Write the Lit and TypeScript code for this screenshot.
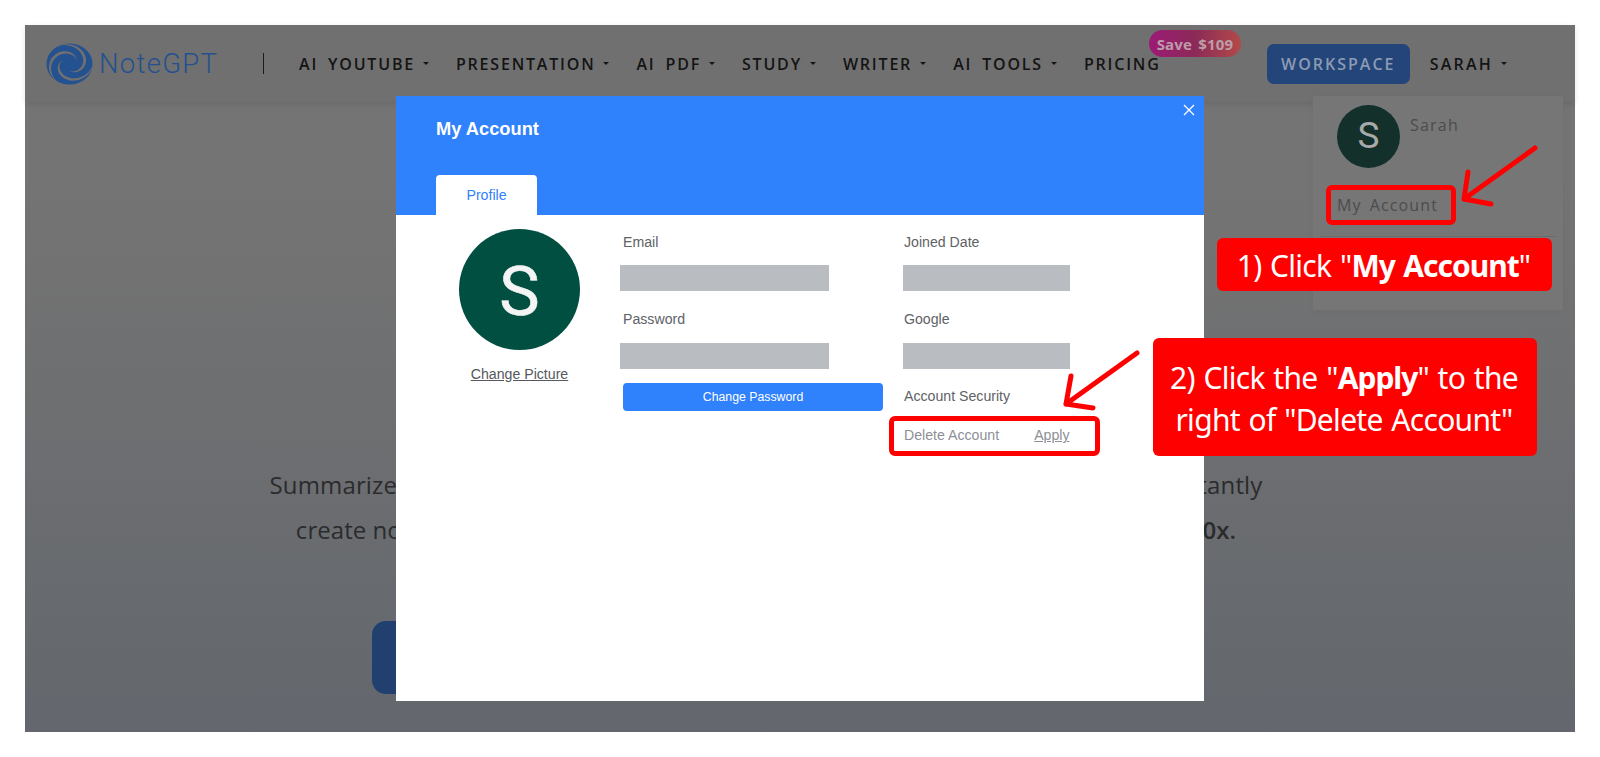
import { LitElement, html, css, svg } from "lit";
import { customElement } from "lit/decorators.js";

const NAV = [
  { t: "AI YOUTUBE", c: true },
  { t: "PRESENTATION", c: true },
  { t: "AI PDF", c: true },
  { t: "STUDY", c: true },
  { t: "WRITER", c: true },
  { t: "AI TOOLS", c: true },
  { t: "PRICING", c: false },
];

function blade(offset: number): string {
  const steps = 24;
  const outer: string[] = [];
  const inner: string[] = [];
  for (let i = 0; i <= steps; i++) {
    const t = i / steps;
    const r = 50 - 34 * t;
    const a = ((offset + 215 * t) * Math.PI) / 180;
    const w = 6 * Math.sin(Math.PI * Math.min(1, t * 1.05)) + 0.4;
    const p = (rad: number) =>
      `${(50 + rad * Math.cos(a)).toFixed(1)} ${(50 + rad * Math.sin(a)).toFixed(1)}`;
    outer.push(p(r + w / 2));
    inner.unshift(p(r - w / 2));
  }
  return "M" + outer.concat(inner).join(" L") + " Z";
}

const swirl = svg`<svg class="logo" viewBox="0 0 100 100" preserveAspectRatio="none" aria-hidden="true">
  <circle cx="50" cy="50" r="49" fill="#24518f"></circle>
  ${[0, 120, 240].map((a) => svg`<path fill="#707070" d="${blade(a)}"></path>`)}
</svg>`;

@customElement("app-root")
export class AppRoot extends LitElement {
  static styles = css`
    :host {
      display: block;
      position: relative;
      width: 1600px;
      height: 757px;
      background: #fff;
      overflow: hidden;
      font-family: "Liberation Sans", Arial, sans-serif;
    }
    .frame {
      margin: 25px;
      height: 707px;
      background: linear-gradient(#757575 0%, #737373 30%, #63676d 100%);
      display: flex;
      flex-direction: column;
      font-family: "Open Sans", sans-serif;
    }
    .nav {
      height: 77px;
      flex: none;
      background: #707070;
      box-shadow: 0 2px 6px rgba(0, 0, 0, 0.1);
      display: flex;
      align-items: center;
      padding-left: 21px;
      position: relative;
    }
    .logo {
      width: 47px;
      height: 42px;
      flex: none;
      margin-right: 6px;
    }
    .brand {
      font: 300 27.5px Roboto, sans-serif;
      letter-spacing: 1.3px;
      color: #24508f;
      width: 164px;
      flex: none;
    }
    .sep {
      width: 1px;
      height: 21px;
      background: #1a1a1a;
      flex: none;
      margin-right: 35px;
    }
    .items {
      display: flex;
      gap: 27px;
      align-items: center;
    }
    .item {
      font-size: 16px;
      font-weight: 600;
      letter-spacing: 1.8px;
      word-spacing: 4px;
      color: #141414;
      white-space: nowrap;
      display: flex;
      align-items: center;
    }
    .item.user {
      letter-spacing: 2.2px;
    }
    .caret {
      width: 0;
      height: 0;
      margin-left: 8px;
      border: 3px solid transparent;
      border-top-color: #141414;
      border-bottom-width: 0;
    }
    .badge {
      position: absolute;
      left: 1124px;
      top: 5px;
      width: 92px;
      height: 27px;
      border-radius: 14px;
      background: linear-gradient(90deg, #9c1a76, #8c2a58 50%, #b24a48);
      color: #bd9ca9;
      font-size: 15px;
      font-weight: 700;
      letter-spacing: 0.2px;
      word-spacing: 2px;
      display: flex;
      align-items: center;
      justify-content: center;
      white-space: nowrap;
    }
    .right {
      margin-left: auto;
      display: flex;
      align-items: center;
      padding-right: 68px;
    }
    .workspace {
      width: 143px;
      height: 40px;
      border-radius: 7px;
      background: #24457a;
      color: #8b9bb2;
      font-size: 16px;
      font-weight: 600;
      letter-spacing: 2px;
      display: flex;
      align-items: center;
      justify-content: center;
      margin-right: 20px;
    }
    .hero {
      width: 1100px;
      align-self: flex-start;
      margin-left: 191px;
      padding-top: 360px;
      display: flex;
      flex-direction: column;
      align-items: center;
      color: #2b2b2d;
      font-size: 24px;
      line-height: 45px;
      white-space: nowrap;
    }
    .l1 {
      letter-spacing: 0.15px;
    }
    .l2 {
      letter-spacing: 0.05px;
    }
    .hero b {
      font-weight: 600;
    }
    .cta {
      margin-top: 69px;
      width: 789px;
      height: 73px;
      border-radius: 14px;
      background: #214070;
    }
    .modal {
      position: absolute;
      left: 396px;
      top: 96px;
      width: 808px;
      height: 605px;
      background: #fff;
      display: flex;
      flex-direction: column;
      color: #606266;
      font-size: 14.15px;
    }
    .head {
      height: 119px;
      flex: none;
      background: #2f81fc;
      position: relative;
      box-sizing: border-box;
      padding: 22px 40px 0;
      display: flex;
      flex-direction: column;
      justify-content: space-between;
    }
    .title {
      color: #fff;
      font-size: 18.3px;
      font-weight: 700;
      line-height: 22px;
    }
    .tab {
      width: 101px;
      height: 40px;
      background: #fff;
      color: #2f81fc;
      border-radius: 4px 4px 0 0;
      display: flex;
      align-items: center;
      justify-content: center;
    }
    .close {
      position: absolute;
      right: 9px;
      top: 8px;
      width: 12px;
      height: 12px;
    }
    .body {
      display: flex;
      padding-left: 63px;
    }
    .pic {
      width: 121px;
      flex: none;
      margin-top: 14px;
      display: flex;
      flex-direction: column;
      align-items: center;
    }
    .avatar {
      width: 121px;
      height: 121px;
      border-radius: 50%;
      background: #014f40;
      color: #f4f4f4;
      font: 400 68px/127px Roboto, sans-serif;
      text-align: center;
      -webkit-text-stroke: 0.6px #f4f4f4;
    }
    .change {
      margin-top: 14px;
      line-height: 20px;
      text-decoration: underline;
      color: #55585e;
      white-space: nowrap;
    }
    .col {
      padding-top: 17px;
      flex: none;
      display: flex;
      flex-direction: column;
    }
    .col.a {
      margin-left: 40px;
      width: 282px;
    }
    .lab {
      line-height: 20px;
      margin-left: 3px;
    }
    .inp {
      height: 26px;
      background: #b9bcc1;
      margin-top: 13px;
      margin-bottom: 18px;
    }
    .inp.second {
      margin-top: 14px;
      margin-bottom: 0;
    }
    .col.a .inp {
      width: 209px;
    }
    .col.b {
      margin-left: 1px;
    }
    .col.b .inp {
      width: 167px;
    }
    .col.b .lab {
      margin-left: 1px;
    }
    .btn {
      margin: 14px 0 0 3px;
      width: 260px;
      height: 28px;
      border-radius: 4px;
      background: #2f81fc;
      color: #fff;
      font-size: 12.3px;
      display: flex;
      align-items: center;
      justify-content: center;
    }
    .sec {
      margin-top: 17px;
    }
    .del {
      margin: 19px 0 0 1px;
      line-height: 20px;
      color: #8d9097;
      display: flex;
      gap: 35px;
    }
    .dd {
      position: absolute;
      left: 1313px;
      top: 96px;
      width: 250px;
      height: 214px;
      background: #767676;
      box-shadow: 0 2px 8px rgba(0, 0, 0, 0.04);
      font-family: "Open Sans", sans-serif;
      color: #4c4c4c;
      letter-spacing: 1.2px;
      font-size: 16px;
      box-sizing: border-box;
      padding: 9px 6px 0 24px;
    }
    .dd-top {
      display: flex;
      gap: 10px;
    }
    .dd-av {
      width: 63px;
      height: 63px;
      border-radius: 50%;
      background: #14302a;
      color: #a8aaa9;
      font: 400 37px/62px Roboto, sans-serif;
      text-align: center;
      letter-spacing: 0;
      flex: none;
    }
    .dd-name {
      margin-top: 9px;
      line-height: 22px;
    }
    .dd-acc {
      margin-top: 25px;
      line-height: 24px;
      letter-spacing: 1.1px;
      word-spacing: 3px;
    }
    .dd-line {
      margin: 19px 0 0 -17px;
      border-top: 1px solid #6c6c6c;
    }
    .box {
      position: absolute;
      box-sizing: border-box;
      border: 5px solid #ff0000;
      border-radius: 6px;
    }
    .b1 {
      left: 1326px;
      top: 185px;
      width: 130px;
      height: 40px;
    }
    .b2 {
      left: 889px;
      top: 416px;
      width: 211px;
      height: 40px;
    }
    .call {
      position: absolute;
      box-sizing: border-box;
      background: #ff0000;
      color: #fff;
      border-radius: 6px;
      font-family: "Noto Sans", sans-serif;
      font-size: 30px;
      letter-spacing: -0.7px;
      word-spacing: 1.5px;
      line-height: 42px;
      display: flex;
      align-items: center;
      justify-content: center;
      text-align: center;
      white-space: nowrap;
    }
    .call b {
      letter-spacing: -1px;
    }
    .call span {
      position: relative;
      top: 1.5px;
    }
    .c1 {
      left: 1217px;
      top: 238px;
      width: 335px;
      height: 53px;
      padding-right: 2px;
    }
    .c2 {
      left: 1153px;
      top: 338px;
      width: 384px;
      height: 118px;
      padding-right: 2px;
    }
    .arrows {
      position: absolute;
      left: 0;
      top: 0;
      width: 1600px;
      height: 757px;
      pointer-events: none;
    }
  `;

  render() {
    return html`
      <div class="frame">
        <div class="nav">
          ${swirl}
          <div class="brand">NoteGPT</div>
          <div class="sep"></div>
          <div class="items">
            ${NAV.map(
              (n) => html`<div class="item">${n.t}${n.c ? html`<span class="caret"></span>` : ""}</div>`
            )}
          </div>
          <div class="badge">Save $109</div>
          <div class="right">
            <div class="workspace">WORKSPACE</div>
            <div class="item user">SARAH<span class="caret"></span></div>
          </div>
        </div>
        <div class="hero">
          <div class="l1">Summarize YouTube videos, PDFs, articles, podcasts and meetings with AI, and instantly</div>
          <div class="l2">create notes, mind maps, quizzes and flashcards that boost your learning up to <b>10x.</b></div>
          <div class="cta"></div>
        </div>
      </div>

      <div class="dd">
        <div class="dd-top">
          <div class="dd-av">S</div>
          <div class="dd-name">Sarah</div>
        </div>
        <div class="dd-acc">My Account</div>
        <div class="dd-line"></div>
      </div>

      <div class="modal">
        <div class="head">
          <div class="title">My Account</div>
          <div class="tab">Profile</div>
          <svg class="close" viewBox="0 0 12 12" aria-hidden="true">
            <path d="M1 1 L11 11 M11 1 L1 11" stroke="#fff" stroke-width="1.3" fill="none"></path>
          </svg>
        </div>
        <div class="body">
          <div class="pic">
            <div class="avatar">S</div>
            <div class="change">Change Picture</div>
          </div>
          <div class="col a">
            <div class="lab">Email</div>
            <div class="inp"></div>
            <div class="lab">Password</div>
            <div class="inp second"></div>
            <div class="btn">Change Password</div>
          </div>
          <div class="col b">
            <div class="lab">Joined Date</div>
            <div class="inp"></div>
            <div class="lab">Google</div>
            <div class="inp second"></div>
            <div class="lab sec">Account Security</div>
            <div class="del"><span>Delete Account</span><u>Apply</u></div>
          </div>
        </div>
      </div>

      <div class="box b1"></div>
      <div class="box b2"></div>
      <svg class="arrows" viewBox="0 0 1600 757" aria-hidden="true">
        <g fill="none" stroke="#ff0000" stroke-width="5" stroke-linecap="round" stroke-linejoin="round">
          <path d="M1535 148 L1464 199 M1468 172 L1464 199 L1491 204"></path>
          <path d="M1137 353 L1066 404 M1071 376 L1066 404 L1093 408"></path>
        </g>
      </svg>
      <div class="call c1"><span>1) Click "<b>My Account</b>"</span></div>
      <div class="call c2"><span>2) Click the "<b>Apply</b>" to the<br />right of "Delete Account"</span></div>
    `;
  }
}
